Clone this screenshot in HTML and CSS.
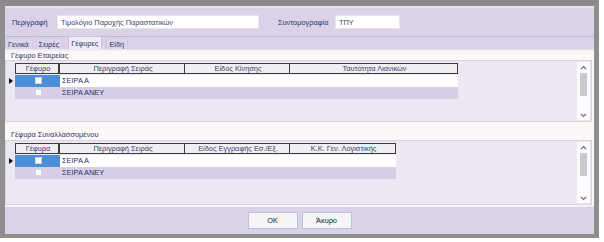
FILE: index.html
```html
<!DOCTYPE html>
<html>
<head>
<meta charset="utf-8">
<link rel="stylesheet" href="styles.css">
</head>
<body>
<div class="screen">
  <div class="window">
    <div class="titlebar"></div>
    <div class="dialog">
      <div class="header">
        <span class="lbl lbl-desc">Περιγραφή</span>
        <span class="input input-desc">Τιμολόγιο Παροχής Παραστατικών</span>
        <span class="lbl lbl-short">Συντομογραφία</span>
        <span class="input input-short">ΤΠΥ</span>
      </div>
      <div class="tabs">
        <span class="tab">Γενικά</span>
        <span class="tab">Σειρές</span>
        <span class="tab active">Γέφυρες</span>
        <span class="tab last">Είδη</span>
      </div>
      <div class="content">
        <div class="group-label">Γέφυρο Εταιρείας</div>
        <div class="grid grid1">
          <div class="table">
            <div class="row head">
              <div class="c c1">Γέφυρο</div>
              <div class="c c2">Περιγραφή Σειράς</div>
              <div class="c c3">Είδος Κίνησης</div>
              <div class="c c4">Ταυτότητα Λιανικών</div>
            </div>
            <div class="row sel">
              <span class="ind"></span>
              <div class="c c1"><span class="chk"></span></div>
              <div class="c c2">ΣΕΙΡΑ Α</div>
              <div class="c c3"></div>
              <div class="c c4"></div>
            </div>
            <div class="row alt">
              <div class="c c1"><span class="chk"></span></div>
              <div class="c c2">ΣΕΙΡΑ ΑΝΕΥ</div>
              <div class="c c3"></div>
              <div class="c c4"></div>
            </div>
          </div>
          <div class="scroll">
            <svg class="arr" width="7" height="5" viewBox="0 0 7 5"><path d="M1 4 L3.5 1.5 L6 4" fill="none" stroke="#707070" stroke-width="1.2"/></svg>
            <div class="thumb"></div>
            <svg class="arr down" width="7" height="5" viewBox="0 0 7 5"><path d="M1 1 L3.5 3.5 L6 1" fill="none" stroke="#707070" stroke-width="1.2"/></svg>
          </div>
        </div>
        <div class="group-label second">Γέφυρα Συναλλασσομένου</div>
        <div class="grid grid2">
          <div class="table">
            <div class="row head">
              <div class="c c1">Γέφυρα</div>
              <div class="c c2">Περιγραφή Σειράς</div>
              <div class="c c3">Είδος Εγγραφής Εσ./Εξ.</div>
              <div class="c c5">Κ.Κ. Γεν. Λογιστικής</div>
            </div>
            <div class="row sel">
              <span class="ind"></span>
              <div class="c c1"><span class="chk"></span></div>
              <div class="c c2">ΣΕΙΡΑ Α</div>
              <div class="c c3"></div>
              <div class="c c5"></div>
            </div>
            <div class="row alt">
              <div class="c c1"><span class="chk"></span></div>
              <div class="c c2">ΣΕΙΡΑ ΑΝΕΥ</div>
              <div class="c c3"></div>
              <div class="c c5"></div>
            </div>
          </div>
          <div class="scroll">
            <svg class="arr" width="7" height="5" viewBox="0 0 7 5"><path d="M1 4 L3.5 1.5 L6 4" fill="none" stroke="#707070" stroke-width="1.2"/></svg>
            <div class="thumb"></div>
            <svg class="arr down" width="7" height="5" viewBox="0 0 7 5"><path d="M1 1 L3.5 3.5 L6 1" fill="none" stroke="#707070" stroke-width="1.2"/></svg>
          </div>
        </div>
      </div>
      <div class="footer">
        <button class="btn">OK</button>
        <button class="btn">Άκυρο</button>
      </div>
    </div>
  </div>
</div>
</body>
</html>
```
FILE: styles.css
```css
* { box-sizing: border-box; }
html, body { margin: 0; padding: 0; }
body {
  width: 604px;
  height: 242px;
  background: #ffffff;
  font-family: "Liberation Sans", Arial, sans-serif;
  font-size: 7.4px;
  color: #2a3563;
  overflow: hidden;
}
.screen {
  width: 604px;
  height: 242px;
}
.window {
  width: 599px;
  height: 238px;
  background: #8e8e8e;
  padding: 0 5px 4px 5px;
  display: flex;
  flex-direction: column;
}
.titlebar {
  height: 6px;
  background: #8a8a8a;
  margin: 0 -5px;
}
.dialog {
  flex: 1;
  background: #dbd2e9;
  display: flex;
  flex-direction: column;
  border-top: 2px solid #e6e0ee;
}
.header {
  height: 29px;
  display: flex;
  align-items: center;
  border-bottom: 1px solid #c3b9d3;
  padding-left: 7px;
}
.lbl { white-space: nowrap; }
.lbl-desc { width: 45px; }
.input {
  background: #ffffff;
  height: 14px;
  line-height: 13px;
  padding-left: 3px;
  border: 1px solid #e8e4ee;
  color: #3a3f63;
}
.input-desc { width: 202px; }
.lbl-short { margin-left: 19px; width: 57px; }
.input-short { width: 65px; }
.tabs {
  height: 13px;
  display: flex;
  align-items: flex-end;
  padding-left: 0;
  border-bottom: 1px solid #ebe7f0;
}
.tab {
  height: 11px;
  line-height: 11px;
  padding: 0 3px 0 2px;
  margin-right: 3px;
  border: 1px solid #d3cade;
  border-bottom: none;
  background: #dcd4ea;
}
.tab.active {
  height: 13px;
  line-height: 13px;
  margin-left: 2px;
  margin-right: 4px;
  background: #efebf5;
  border-color: #c9c0d6;
}
.content {
  height: 156px;
  background: #fdf8f8;
  border-top: 1px solid #f4eeee;
  display: flex;
  flex-direction: column;
}
.group-label {
  height: 9px;
  line-height: 9px;
  padding-left: 6px;
}
.group-label.second { margin-top: 8px; height: 10px; line-height: 10px; }
.grid {
  margin-right: 2px;
  background: #ede6f3;
  border: 1px solid #d7d0de;
  display: flex;
  position: relative;
}
.grid1 { height: 62px; }
.grid2 { height: 65px; }
.table {
  flex: 1;
  padding-top: 2px;
  padding-left: 9px;
}
.row {
  display: flex;
  height: 12px;
  position: relative;
}
.c {
  height: 100%;
  line-height: 11px;
  padding-left: 2px;
  white-space: nowrap;
  overflow: hidden;
}
.c1 { width: 45px; text-align: center; }
.c2 { width: 125px; }
.c3 { width: 105px; }
.c4 { width: 168px; }
.c5 { width: 106px; }
.head .c {
  background: #f1eef3;
  border: 1px solid #3d3d3d;
  border-left-width: 0;
  text-align: center;
  line-height: 9px;
  height: 11px;
  color: #3a4066;
}
.head .c1 { border-left-width: 1px; border-right-width: 2px; }
.head { height: 11px; margin-bottom: 1px; }
.sel .c { background: #ffffff; }
.sel .c1 { background: #4b8fd8; }
.alt .c { background: #d7cde6; }
.chk {
  display: inline-block;
  width: 7px;
  height: 7px;
  background: #ffffff;
  border: 1px solid #cfd4dc;
  vertical-align: middle;
  margin-top: -2px;
}
.ind {
  position: absolute;
  left: -6px;
  top: 3px;
  width: 0;
  height: 0;
  border-top: 3px solid transparent;
  border-bottom: 3px solid transparent;
  border-left: 4px solid #111111;
}
.scroll {
  width: 13px;
  margin: 1px 1px 1px 0;
  background: #fbfbfd;
  display: flex;
  flex-direction: column;
  align-items: center;
  padding: 3px 0 2px;
}
.arr { display: block; }
.thumb {
  width: 7px;
  height: 23px;
  margin-top: 3px;
  background: #c9c9c9;
}
.down { margin-top: auto; }
.footer {
  flex: 1;
  background: #dbd2e9;
  border-top: 1px solid #efeaf4;
  display: flex;
  justify-content: center;
  align-items: center;
  gap: 4px;
}
.btn {
  width: 50px;
  height: 17px;
  font-family: "Liberation Sans", Arial, sans-serif;
  font-size: 7.4px;
  color: #222222;
  background: #f5f5f7;
  border: 1px solid #b9c3dc;
  padding: 0;
}
```
